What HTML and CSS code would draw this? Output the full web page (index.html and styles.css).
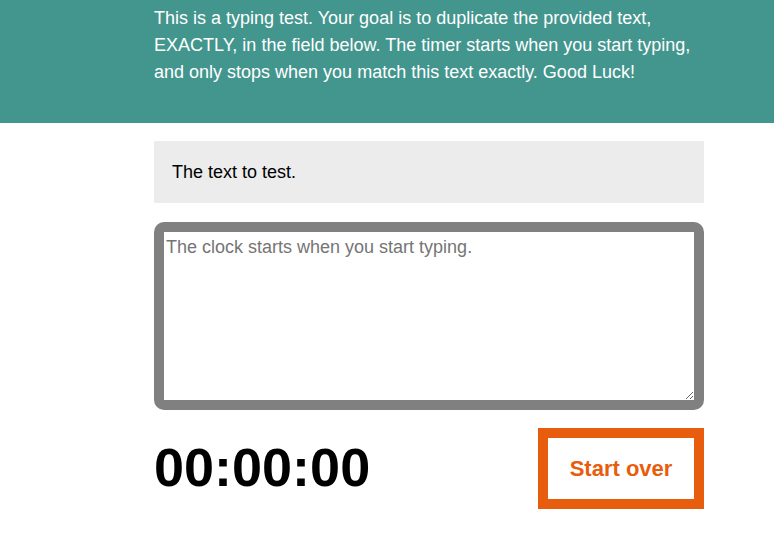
FILE: index.html
```html
<!DOCTYPE html>
<html lang="en">
<head>
<meta charset="utf-8">
<title>Typing Test</title>
<link rel="stylesheet" href="styles.css">
</head>
<body>
<header class="masthead">
  <div class="intro">
    <p>This is a typing test. Your goal is to duplicate the provided text, EXACTLY, in the field below. The timer starts when you start typing, and only stops when you match this text exactly. Good Luck!</p>
  </div>
</header>
<main class="main">
  <section class="test-area">
    <div class="origin-text"><p>The text to test.</p></div>
    <div class="test-wrapper">
      <textarea class="test-input" placeholder="The clock starts when you start typing."></textarea>
    </div>
    <div class="meta">
      <div class="timer">00:00:00</div>
      <button class="reset">Start over</button>
    </div>
  </section>
</main>
</body>
</html>
```

FILE: styles.css
```css
html, body {
  margin: 0;
  padding: 0;
  background: #fff;
  font-family: "Liberation Sans", Arial, sans-serif;
}

.masthead {
  background: #43968d;
  color: #fff;
  padding: 5px 0 37px;
}

.intro {
  margin-left: 154px;
  width: 550px;
}

.intro p {
  margin: 0;
  font-size: 18px;
  line-height: 27px;
}

.main {
  margin-left: 154px;
  width: 550px;
  padding-top: 18px;
}

.origin-text {
  background: #ececec;
  padding: 18px 18px 17px;
}

.origin-text p {
  margin: 0;
  font-size: 18px;
  line-height: 27px;
  color: #000;
}

.test-wrapper {
  margin-top: 19px;
  display: flex;
}

.test-input {
  box-sizing: border-box;
  width: 100%;
  height: 188px;
  border: 10px solid #808080;
  border-radius: 10px;
  padding: 2px;
  margin: 0;
  font-family: "Liberation Sans", Arial, sans-serif;
  font-size: 18px;
  line-height: 27px;
  background: #fff;
  outline: none;
}

.test-input::placeholder {
  color: #757575;
}

.meta {
  margin-top: 18px;
  display: flex;
  justify-content: space-between;
  align-items: center;
}

.timer {
  font-size: 54px;
  font-weight: bold;
  color: #000;
  line-height: 1;
  padding-bottom: 4px;
}

.reset {
  box-sizing: border-box;
  width: 166px;
  height: 81px;
  border: 10px solid #e85c0d;
  background: #fff;
  color: #e85c0d;
  font-family: "Liberation Sans", Arial, sans-serif;
  font-size: 22px;
  font-weight: bold;
  padding: 0;
  margin: 0;
  cursor: pointer;
}
```
